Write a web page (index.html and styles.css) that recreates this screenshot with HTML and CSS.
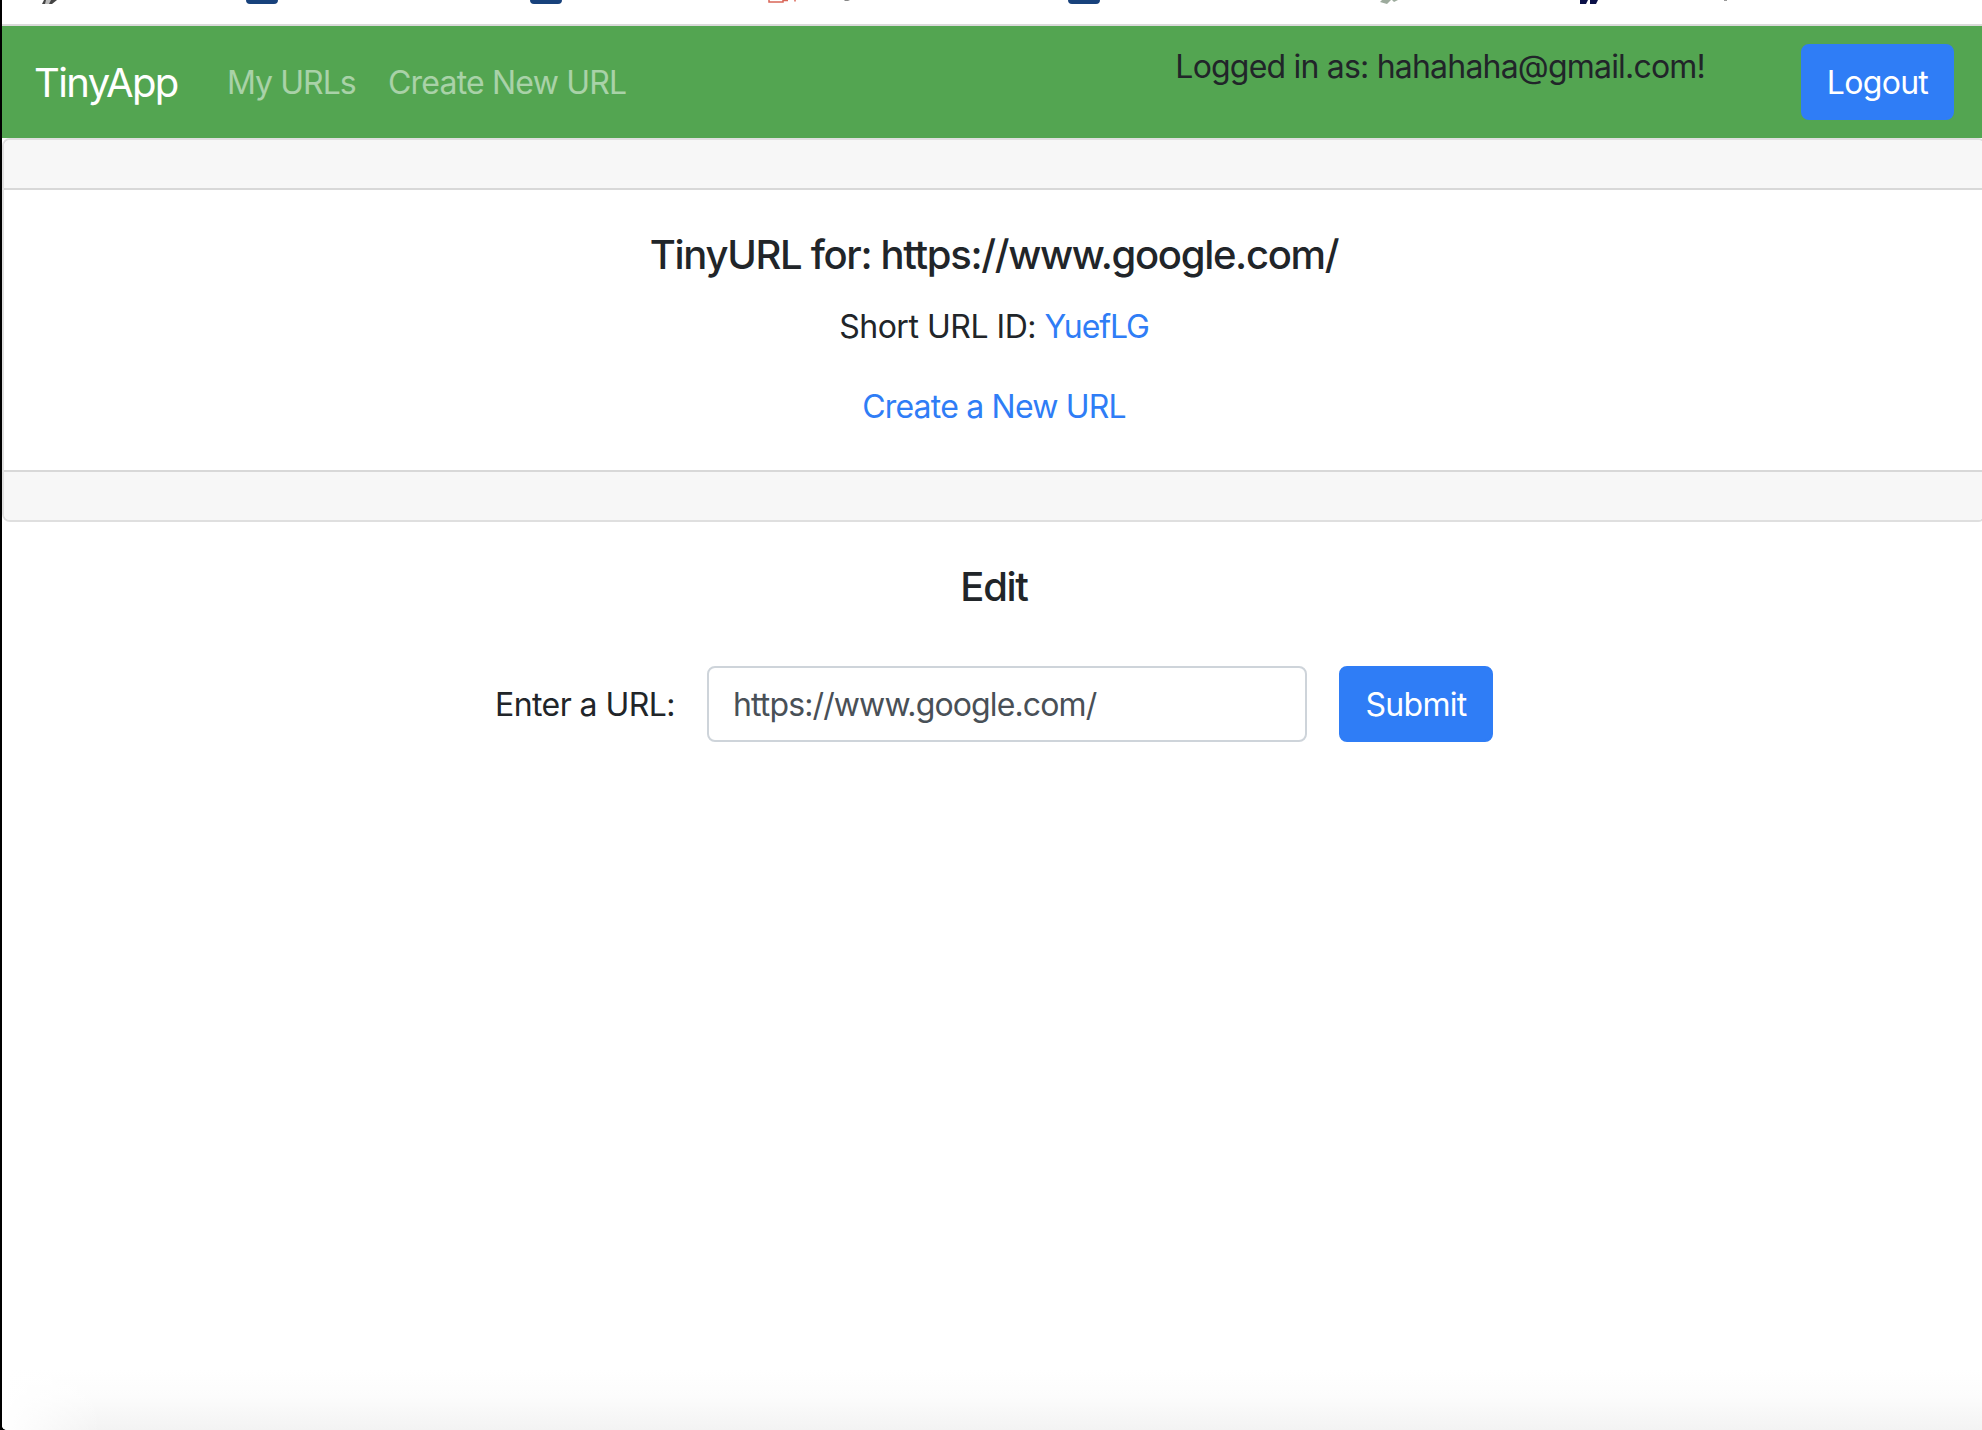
FILE: index.html
```html
<!DOCTYPE html>
<html lang="en">
<head>
<meta charset="utf-8">
<title>TinyApp</title>
<link rel="stylesheet" href="styles.css">
</head>
<body>
<div class="window">
  <div class="bookmarks">
    <svg width="1980" height="24" viewBox="2 0 1980 24" aria-hidden="true">
      <path d="M44 0L42 4H52L57 0Z" fill="#444"/><path d="M46 0L45 4H49L51 0Z" fill="#bbb"/>
      <path d="M246 0H278Q278 4 274 4H250Q246 4 246 0ZM530 0H562Q562 4 558 4H534Q530 4 530 0ZM1068 0H1100Q1100 4 1096 4H1072Q1068 4 1068 0Z" fill="#18427c"/>
      <path d="M769 0V2H783V0M783 .5H788M795 0V1.5" fill="none" stroke="#d96557" stroke-width="1.5"/>
      <path d="M844 0H850L848 1H845Z" fill="#888"/>
      <path d="M1382 0L1380 2L1387 4L1391 0ZM1392 0L1394 2L1398 0Z" fill="#9dab9d"/>
      <path d="M1580 0V4H1586L1588 0ZM1590 0V4H1596L1598 0Z" fill="#0b1048"/>
      <path d="M1724 0H1727V1H1724Z" fill="#999"/>
    </svg>
  </div>
  <nav class="navbar">
    <a class="brand">TinyApp</a>
    <a class="nav-link urls">My URLs</a>
    <a class="nav-link create">Create New URL</a>
    <p class="account">Logged in as: hahahaha@gmail.com!</p>
    <button class="btn logout">Logout</button>
  </nav>
  <main>
    <section class="card">
      <div class="card-strip card-header"></div>
      <div class="card-body">
        <h5 class="title">TinyURL for: https://www.google.com/</h5>
        <p class="line short">Short URL ID: <a class="link short-id">YuefLG</a></p>
        <p class="line"><a class="link new">Create a New URL</a></p>
      </div>
      <div class="card-strip card-footer"></div>
    </section>
    <section class="edit">
      <h5 class="title">Edit</h5>
      <form class="edit-form">
        <label class="label" for="url">Enter a URL:</label>
        <input class="input" id="url" type="text" value="https://www.google.com/">
        <button class="btn submit" type="button">Submit</button>
      </form>
    </section>
  </main>
  <div class="bottom-shade"></div>
</div>
</body>
</html>
```
FILE: styles.css
```css
* { box-sizing: border-box; }
html { background: #000; }
body {
  margin: 0;
  overflow: hidden;
  background: #000;
  color: #212529;
  font: 400 32px/48px Inter, "Liberation Sans", sans-serif;
  letter-spacing: -.8px;
}
.window {
  display: flex;
  flex-direction: column;
  width: 1984px;
  height: 1430px;
  margin-left: 2px;
  background: #fff;
  border-bottom-left-radius: 5px;
  overflow: hidden;
}
.bookmarks { height: 26px; border-bottom: 2px solid #dadada; }
.bookmarks svg { display: block; }
.navbar {
  display: flex;
  align-items: center;
  height: 112px;
  padding: 16px 32px;
  background: #53a551;
}
.brand {
  width: 145px;
  margin-right: 32px;
  padding-top: 2px;
  color: #fff;
  font-size: 40px;
  line-height: 60px;
  letter-spacing: -1.6px;
  white-space: nowrap;
}
.nav-link { padding: 17px 16px 15px; color: rgba(255, 255, 255, .5); white-space: nowrap; }
.urls { width: 161px; letter-spacing: -.95px; }
.account { margin: 0 96px 30px auto; white-space: nowrap; }
.btn {
  height: 76px;
  padding: 12px 22px 10px;
  border: 2px solid #2f7df6;
  border-radius: 8px;
  background: #2f7df6;
  color: #fff;
  font: inherit;
  letter-spacing: -.7px;
  white-space: nowrap;
}
.logout { width: 153px; }
.submit { width: 154px; }
.card { border: 2px solid #dfdfdf; border-radius: 8px; overflow: hidden; }
.card-strip { height: 50px; background: #f7f7f7; }
.card-header { border-bottom: 2px solid #d8d8d8; }
.card-footer { border-top: 2px solid #d8d8d8; }
.card-body { height: 280px; padding: 41px 40px 39px; text-align: center; }
.title {
  margin: 0 0 24px;
  font-size: 40px;
  font-weight: 500;
  line-height: 48px;
  letter-spacing: -1.32px;
  text-align: center;
}
.line { margin: 0 0 32px; }
.short { letter-spacing: -.48px; }
.short-id { letter-spacing: -1.1px; }
.link { color: #2f7df6; }
.edit { padding: 41px 40px 0; }
.edit-form { display: flex; justify-content: center; align-items: center; gap: 32px; margin-top: 55px; }
.label { width: 180px; padding-top: 2px; letter-spacing: -.57px; white-space: nowrap; }
.input {
  width: 600px;
  height: 76px;
  padding: 12px 24px;
  border: 2px solid #ced4da;
  border-radius: 8px;
  background: #fff;
  color: #495057;
  font: inherit;
  letter-spacing: -.88px;
}
.bottom-shade {
  height: 60px;
  margin-top: auto;
  background: linear-gradient(90deg, #fff, rgba(255, 255, 255, 0) 100px), linear-gradient(#fff, #fcfcfc 45%, #f3f3f3);
}
```
